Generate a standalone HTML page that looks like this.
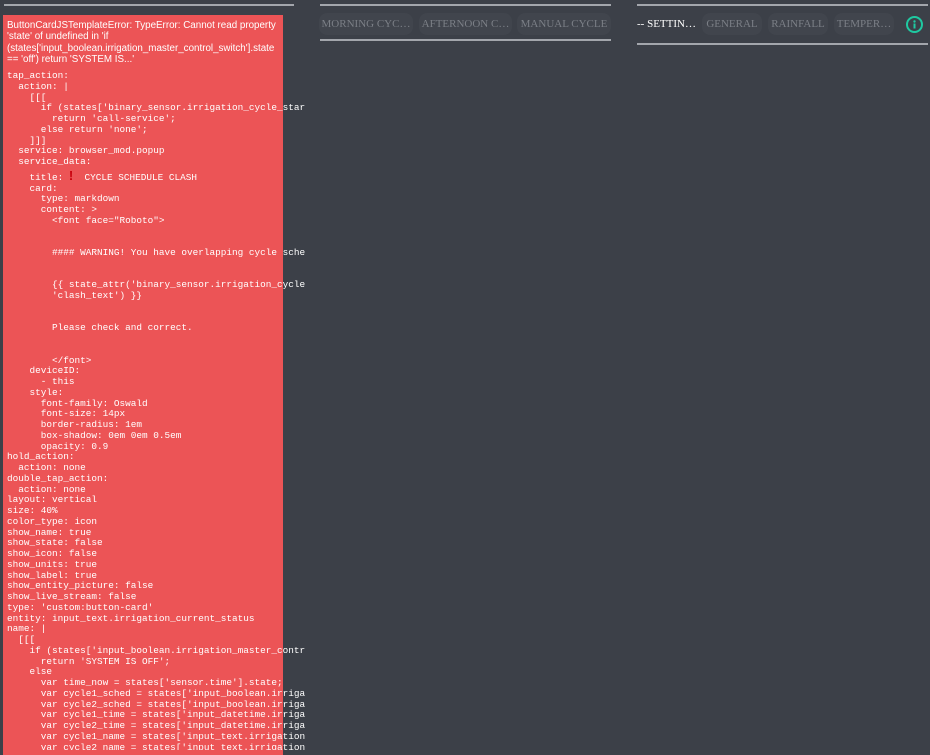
<!DOCTYPE html>
<html><head><meta charset="utf-8"><style>
*{margin:0;padding:0;box-sizing:border-box}
body{width:930px;height:750px;background:#3c4048;overflow:hidden;position:relative;font-family:"Liberation Sans",sans-serif}
.ln{position:absolute;height:2px;background:#a3a6ac}
.card{position:absolute;left:3px;top:15px;width:280px;height:740px;background:#ec5456}
.hdr{position:absolute;left:7px;top:20px;width:300px;color:#fff;font-size:9.8px;line-height:11.4px;white-space:nowrap}
.clip{position:absolute;left:0;top:0;width:305px;height:750px;overflow:hidden}
pre{position:absolute;left:7px;top:71px;color:#fff;font-family:"Liberation Mono",monospace;font-size:9.4px;line-height:10.75px;white-space:pre}
.t{display:inline-block;height:15px;line-height:15px}
.ex{color:#c8000c;font-family:"Liberation Sans",sans-serif;font-weight:bold;font-size:13px}
.pill{position:absolute;top:13px;height:22px;border-radius:8px;background:#41454d;color:#7b7f86;font-family:"Liberation Serif",serif;font-size:11px;line-height:22px;text-align:center;white-space:nowrap;overflow:hidden}
.info{position:absolute;left:906px;top:16px;width:17px;height:17px;border:2px solid #1fc9a1;border-radius:50%}
</style></head><body>
<div class="ln" style="left:4px;top:4px;width:290px"></div>
<div class="ln" style="left:320px;top:4px;width:291px"></div>
<div class="ln" style="left:320px;top:39px;width:291px"></div>
<div class="ln" style="left:637px;top:4px;width:291px"></div>
<div class="ln" style="left:637px;top:43px;width:291px"></div>
<div class="pill" style="left:319px;width:94px">MORNING CYC…</div>
<div class="pill" style="left:419px;width:93px">AFTERNOON C…</div>
<div class="pill" style="left:517px;width:94px">MANUAL CYCLE</div>
<div class="pill" style="left:637px;width:62px;background:none;color:#fff;text-align:left">-- SETTIN…</div>
<div class="pill" style="left:702px;width:60px">GENERAL</div>
<div class="pill" style="left:768px;width:60px">RAINFALL</div>
<div class="pill" style="left:834px;width:60px">TEMPER…</div>
<div class="info"><svg width="13" height="13" viewBox="0 0 13 13" style="position:absolute;left:0;top:0"><circle cx="6.5" cy="3.5" r="1.2" fill="#1fc9a1"/><rect x="5.5" y="5.5" width="2" height="5" fill="#1fc9a1"/></svg></div>
<div class="card"></div>
<div class="hdr">ButtonCardJSTemplateError: TypeError: Cannot read property<br>'state' of undefined in 'if<br>(states['input_boolean.irrigation_master_control_switch'].state<br>== 'off') return 'SYSTEM IS...'</div>
<div class="clip"><pre>tap_action:
  action: |
    [[[
      if (states['binary_sensor.irrigation_cycle_start_clash'].state == 'on')
        return 'call-service';
      else return 'none';
    ]]]
  service: browser_mod.popup
  service_data:
<span class="t">    title: <span class="ex">!</span>  CYCLE SCHEDULE CLASH</span>
    card:
      type: markdown
      content: &gt;
        &lt;font face="Roboto"&gt;


        #### WARNING! You have overlapping cycle schedules


        {{ state_attr('binary_sensor.irrigation_cycle_start_clash',
        'clash_text') }}


        Please check and correct.


        &lt;/font&gt;
    deviceID:
      - this
    style:
      font-family: Oswald
      font-size: 14px
      border-radius: 1em
      box-shadow: 0em 0em 0.5em
      opacity: 0.9
hold_action:
  action: none
double_tap_action:
  action: none
layout: vertical
size: 40%
color_type: icon
show_name: true
show_state: false
show_icon: false
show_units: true
show_label: true
show_entity_picture: false
show_live_stream: false
type: 'custom:button-card'
entity: input_text.irrigation_current_status
name: |
  [[[
    if (states['input_boolean.irrigation_master_control_switch'].state == 'off')
      return 'SYSTEM IS OFF';
    else
      var time_now = states['sensor.time'].state;
      var cycle1_sched = states['input_boolean.irrigation_cycle1_schedule'].state;
      var cycle2_sched = states['input_boolean.irrigation_cycle2_schedule'].state;
      var cycle1_time = states['input_datetime.irrigation_cycle1_start_time'].state;
      var cycle2_time = states['input_datetime.irrigation_cycle2_start_time'].state;
      var cycle1_name = states['input_text.irrigation_cycle1_name'].state;
      var cycle2_name = states['input_text.irrigation_cycle2_name'].state;
</pre></div>
</body></html>
